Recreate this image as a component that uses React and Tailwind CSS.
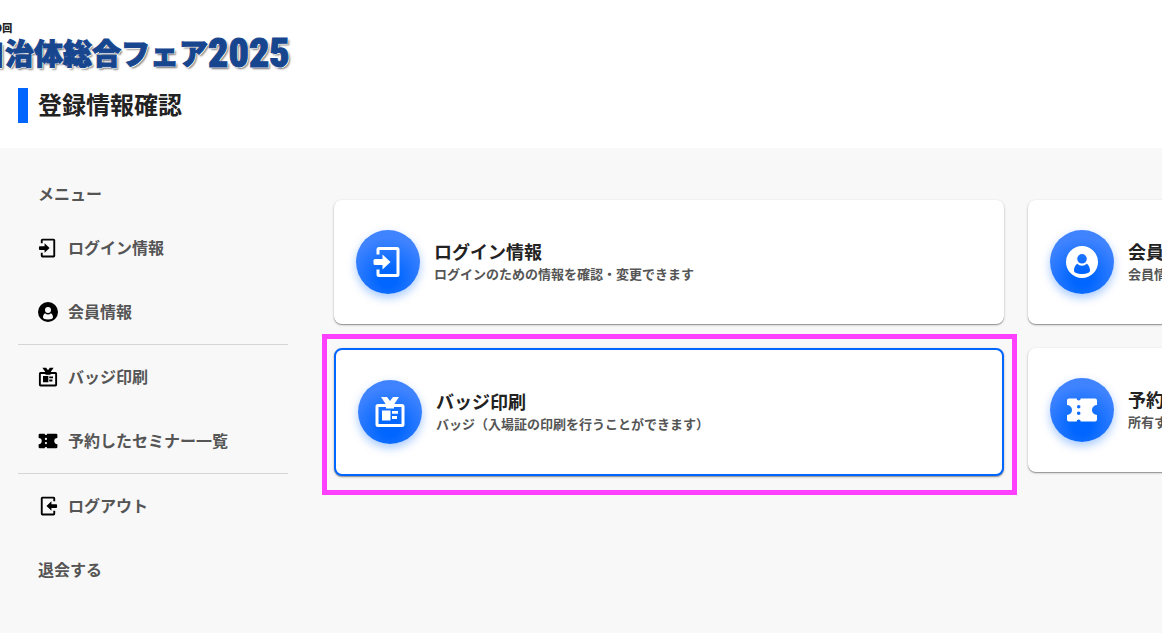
import React from "react";

const LoginIcon = ({ className }) => (
  <svg viewBox="0 0 32 32" className={className} aria-hidden="true">
    <path
      d="M6 8.500V3.500a1 1 0 0 1 1-1H25a1 1 0 0 1 1 1v25a1 1 0 0 1-1 1H7a1 1 0 0 1-1-1v-5"
      fill="none"
      stroke="currentColor"
      strokeWidth="3"
    />
    <path
      d="M3 13h7.500V8.500L18.500 16 10.500 23.500V19H3a1.500 1.500 0 0 1-1.500-1.500v-3A1.500 1.500 0 0 1 3 13z"
      fill="currentColor"
    />
  </svg>
);

const LogoutIcon = ({ className }) => (
  <svg viewBox="0 0 32 32" className={className} aria-hidden="true">
    <path
      d="M26 8.500V3.500a1 1 0 0 0-1-1H7a1 1 0 0 0-1 1v25a1 1 0 0 0 1 1h18a1 1 0 0 0 1-1v-5"
      fill="none"
      stroke="currentColor"
      strokeWidth="3"
    />
    <path
      d="M29 13h-7.500V8.500L13.500 16l8 7.500V19H29a1.500 1.500 0 0 0 1.500-1.500v-3A1.500 1.500 0 0 0 29 13z"
      fill="currentColor"
    />
  </svg>
);

const UserIcon = ({ className }) => (
  <svg viewBox="0 0 32 32" className={className} aria-hidden="true">
    <path
      fill="currentColor"
      fillRule="evenodd"
      d="M16 0a16 16 0 1 0 0 32 16 16 0 0 0 0-32zM16 8a4.800 4.800 0 1 1 0 9.600 4.800 4.800 0 0 1 0-9.600zM11.200 17.800a7 7 0 0 0 9.600 0c2.200 1.500 3.200 4 3.200 7 0 2-3.500 3.200-8 3.200s-8-1.200-8-3.200c0-3 1-5.500 3.200-7z"
    />
  </svg>
);

const BadgeIcon = ({ className }) => (
  <svg viewBox="0 0 32 32" className={className} aria-hidden="true">
    <rect
      x="3"
      y="9.500"
      width="26"
      height="20"
      rx="1"
      fill="none"
      stroke="currentColor"
      strokeWidth="3"
    />
    <path
      fill="currentColor"
      d="M7 1h6l3 4 3-4h6l-5 7.500V12.500h-8V8.500zM8 14.500h8.500V24.500H8zM18 15h6v2.800h-6zM18 20h5v3h-5z"
    />
  </svg>
);

const TicketIcon = ({ className }) => (
  <svg viewBox="0 0 32 32" className={className} aria-hidden="true">
    <path
      fill="currentColor"
      fillRule="evenodd"
      d="M3 4.500h7.700a2 2 0 0 0 4 0H29a2 2 0 0 1 2 2v4.500a5 5 0 0 0 0 10v4.500a2 2 0 0 1-2 2H14.700a2 2 0 0 0-4 0H3a2 2 0 0 1-2-2V21a5 5 0 0 0 0-10V6.500a2 2 0 0 1 2-2zM12.700 10.900a1.800 1.800 0 1 0 0 3.600 1.800 1.800 0 0 0 0-3.600zM12.700 17.500a1.800 1.800 0 1 0 0 3.600 1.800 1.800 0 0 0 0-3.600z"
    />
  </svg>
);

const menuGroups = [
  [
    { label: "ログイン情報", icon: LoginIcon },
    { label: "会員情報", icon: UserIcon },
  ],
  [
    { label: "バッジ印刷", icon: BadgeIcon },
    { label: "予約したセミナー一覧", icon: TicketIcon },
  ],
  [{ label: "ログアウト", icon: LogoutIcon }, { label: "退会する" }],
];

const cards = [
  {
    title: "ログイン情報",
    text: "ログインのための情報を確認・変更できます",
    icon: LoginIcon,
  },
  {
    title: "会員情報",
    text: "会員情報を確認・変更できます",
    icon: UserIcon,
  },
  {
    title: "バッジ印刷",
    text: "バッジ（入場証の印刷を行うことができます）",
    icon: BadgeIcon,
    active: true,
  },
  {
    title: "予約したセミナー一覧",
    text: "所有するセミナーの予約を確認できます",
    icon: TicketIcon,
  },
];

function Card({ title, text, icon: Icon, active }) {
  return (
    <div className="relative">
      <a
        href="#"
        className={`flex items-center gap-3.5 rounded-lg bg-white px-[22px] py-[30px] shadow-[0_1px_1px_rgba(0,0,0,0.3),0_1px_3px_rgba(0,0,0,0.2)] ${
          active ? "border-2 border-[#0066ff]" : ""
        }`}
      >
        <span className="flex size-16 shrink-0 items-center justify-center rounded-full bg-[radial-gradient(circle_at_50%_75%,#0066ff_15%,#3f83ff_70%)] text-white shadow-[0_4px_10px_rgba(0,102,255,0.35)]">
          <Icon className="size-8" />
        </span>
        <span className="flex flex-col whitespace-nowrap">
          <span className="pb-0.5 text-lg leading-[22px] font-bold text-[#222]">
            {title}
          </span>
          <span className="text-[13px] leading-5 font-bold text-[#555]">
            {text}
          </span>
        </span>
      </a>
      {/* Highlight frame around the selected card */}
      {active && (
        <div className="pointer-events-none absolute -top-3.5 -right-[13px] -bottom-[19px] -left-3 border-5 border-[#ff40ff]" />
      )}
    </div>
  );
}

export default function App() {
  return (
    <div className="flex min-h-screen flex-col overflow-hidden bg-[#f8f8f8] font-['Noto_Sans_CJK_JP',sans-serif]">
      {/* Header */}
      <header className="bg-white pt-[22px] pb-[25px]">
        <div className="-ml-6 whitespace-nowrap">
          <p className="ml-1 text-[10px] leading-[12px] font-black text-[#222]">
            第39回
          </p>
          <p className="flex h-[54px] items-start text-[29px] leading-[36px] font-black text-[#17468f] [-webkit-text-stroke:1px_#17468f] [text-shadow:1px_0_#fff,0_1px_#fff,1px_1px_#fff,2px_2px_2px_#777]">
            <span>自治体総合フェア</span>
            <span className="pt-0.5 font-['Liberation_Sans_Narrow','Roboto_Condensed','Open_Sans_Condensed','DejaVu_Sans_Condensed',sans-serif] text-[40px]">
              2025
            </span>
          </p>
        </div>
        <h1 className="ml-[18px] border-l-10 border-[#0066ff] pb-1 pl-2.5 text-2xl leading-[31px] font-bold text-[#222]">
          登録情報確認
        </h1>
      </header>

      <div className="flex items-start">
        {/* Sidebar */}
        <nav className="ml-[18px] w-[270px] shrink-0 pt-6 text-base font-bold text-[#555]">
          <h2 className="flex h-11 items-center pb-0.5 pl-5">メニュー</h2>
          {menuGroups.map((group, i) => (
            <ul key={i} className={i > 0 ? "border-t border-[#d6d6d6]" : ""}>
              {group.map(({ label, icon: Icon }) => (
                <li key={label}>
                  <a href="#" className="flex h-16 items-center gap-2.5 pl-5">
                    {Icon && <Icon className="size-5 text-black" />}
                    <span className="pb-0.5">{label}</span>
                  </a>
                </li>
              ))}
            </ul>
          ))}
        </nav>

        {/* Cards */}
        <main className="ml-[46px] grid flex-1 grid-cols-[repeat(2,minmax(670px,1fr))] items-start gap-6 pt-13">
          {cards.map((card) => (
            <Card key={card.title} {...card} />
          ))}
        </main>
      </div>
    </div>
  );
}
